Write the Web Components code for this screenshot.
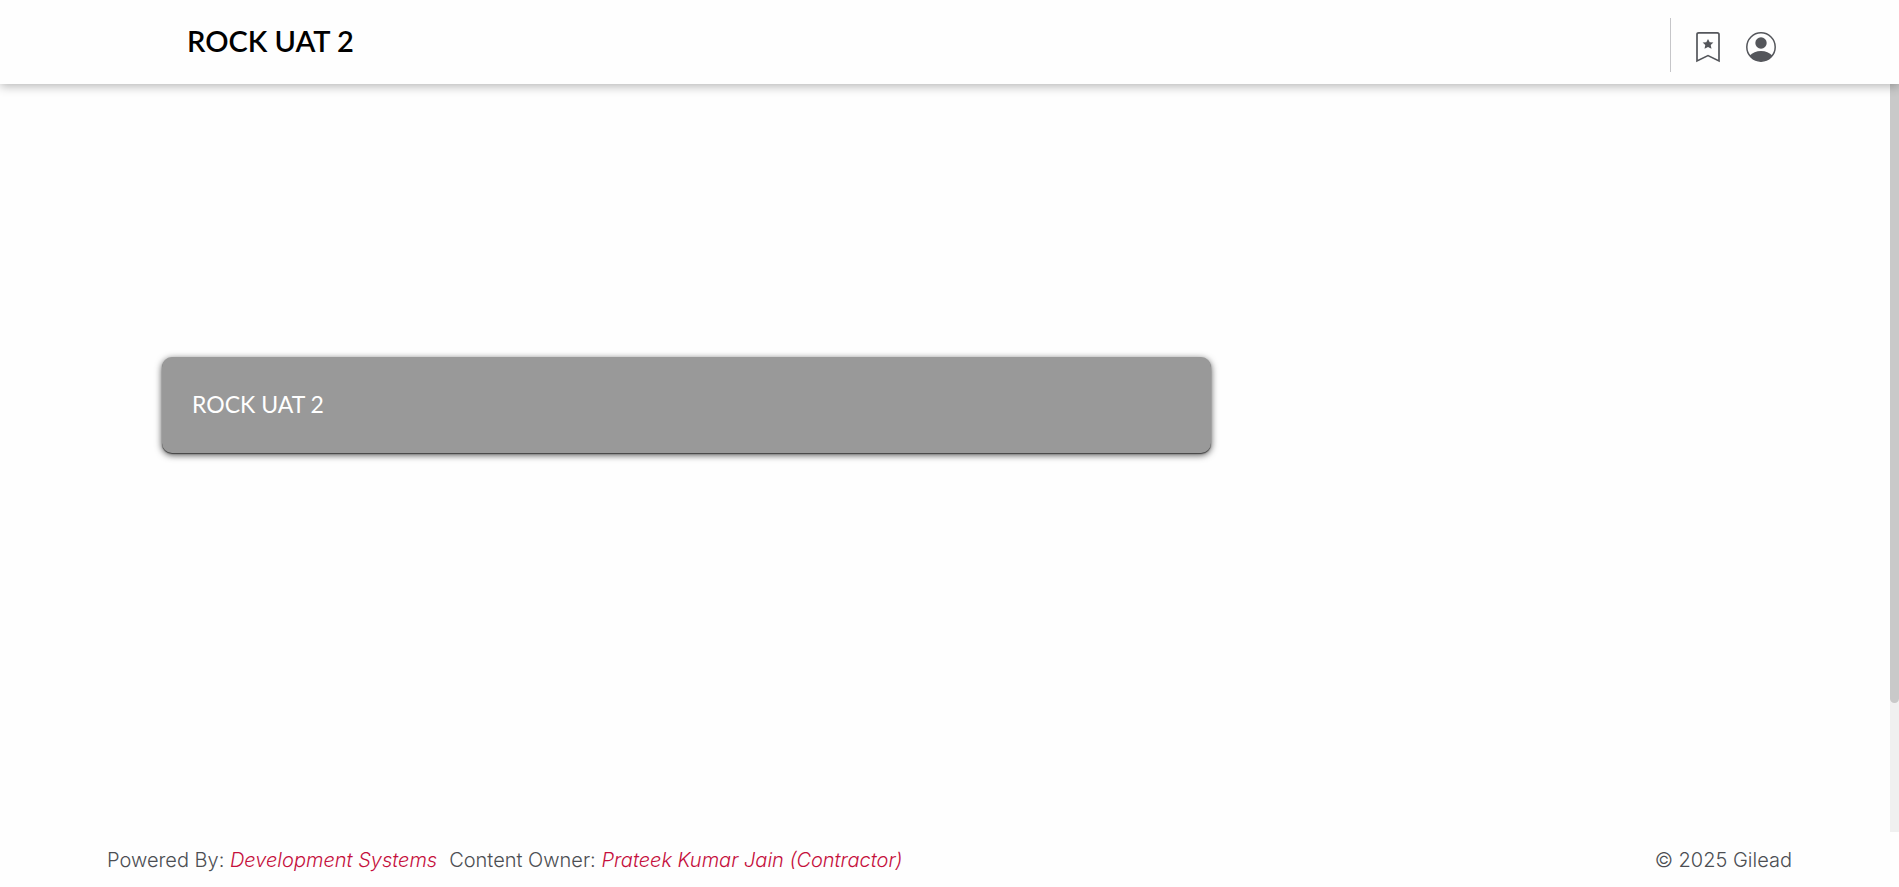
<!DOCTYPE html>
<html lang="en">
<head>
<meta charset="utf-8">
<meta name="viewport" content="width=device-width, initial-scale=1">
<title>ROCK UAT 2</title>
<style>
  html, body { margin: 0; height: 100%; }
  body { background: #fefefe; color: #4c4e53; font: 300 20px/24px Inter, "Open Sans", sans-serif; }
</style>
</head>
<body>
<app-shell>
  <site-header slot="header">ROCK UAT 2
    <icon-button slot="actions" kind="bookmark" label="Bookmarks"></icon-button>
    <icon-button slot="actions" kind="user" label="Profile"></icon-button>
  </site-header>
  <title-card>ROCK UAT 2</title-card>
  <site-footer slot="footer">
    <credit-line label="Powered By:">Development Systems</credit-line>
    <credit-line label="Content Owner:">Prateek Kumar Jain (Contractor)</credit-line>
    <span slot="legal">© 2025 Gilead</span>
  </site-footer>
</app-shell>
<script>
  const define = (name, html, setup) => customElements.define(name, class extends HTMLElement {
    connectedCallback() {
      if (this.shadowRoot) return;
      this.attachShadow({ mode: 'open' }).innerHTML = html;
      if (setup) setup(this, this.shadowRoot);
    }
  });

  define('app-shell', `
    <style>
      :host { display: flex; flex-direction: column; min-height: 100vh; }
      .view { display: flex; flex: 1; }
      main { flex: 1; min-width: 0; padding: 273px 162px 0; }
      .track { display: grid; grid-template-rows: 24fr 5fr; width: 9px; background: #f0f0f0; }
      .thumb { background: #c9c9c9; border-radius: 0 0 5px 5px; }
    </style>
    <slot name="header"></slot>
    <div class="view">
      <main><slot></slot></main>
      <div class="track" aria-hidden="true"><div class="thumb"></div></div>
    </div>
    <slot name="footer"></slot>`);

  define('site-header', `
    <style>
      :host { display: block; position: relative; z-index: 1; background: #fefefe; box-shadow: 0 2px 10px rgba(0, 0, 0, .3); }
      header { display: flex; justify-content: space-between; align-items: flex-start; height: 84px; box-sizing: border-box; padding: 18px 123px 0 187px; }
      h1 { margin: 0; font-family: Lato, sans-serif; font-size: 29px; line-height: 46px; font-weight: 600; color: #000; }
      nav { display: flex; align-items: center; gap: 23px; height: 54px; padding-left: 22px; border-left: 1px solid #c6c6c9; }
    </style>
    <header><h1><slot></slot></h1><nav aria-label="Account"><slot name="actions"></slot></nav></header>`);

  const icons = {
    bookmark: `<svg width="30" height="32" viewBox="0 0 30 32"><path d="M4 30V3.5Q4 1.8 5.7 1.8H24.3Q26 1.8 26 3.5V30L15 24.6Z" fill="none" stroke="currentColor" stroke-width="1.7"/><path d="M15 8l1.7 3.2 3.7.4-2.7 2.5.8 3.7-3.5-1.8-3.5 1.8.8-3.7-2.7-2.5 3.7-.4z" fill="currentColor"/></svg>`,
    user: `<svg width="30" height="32" viewBox="0 0 30 32"><circle cx="15" cy="16" r="14.2" fill="none" stroke="currentColor" stroke-width="1.5"/><circle cx="15" cy="12" r="5.7" fill="currentColor"/><path d="M3.5 24.8Q8 20 15 20T26.5 24.8A15 15 0 0 1 3.5 24.8Z" fill="currentColor"/></svg>`
  };
  define('icon-button', `
    <style>
      :host { display: block; }
      button { display: block; padding: 4px 0 0; border: 0; background: none; color: #54565b; cursor: pointer; }
      svg { display: block; }
    </style>
    <button type="button"></button>`, (el, root) => {
      const button = root.querySelector('button');
      button.setAttribute('aria-label', el.getAttribute('label'));
      button.innerHTML = icons[el.getAttribute('kind')];
    });

  define('title-card', `
    <style>
      :host { display: block; width: 67%; box-sizing: border-box; padding: 31px 30px 33px; border-radius: 10px; background: #999; box-shadow: 0 1px 1px #444, 0 2px 7px rgba(0, 0, 0, .7); }
      h2 { margin: 0; font-family: Lato, sans-serif; font-size: 23px; line-height: 32px; font-weight: 400; color: #fff; }
    </style>
    <h2><slot></slot></h2>`);

  define('site-footer', `
    <style>
      :host { display: block; }
      footer { display: flex; justify-content: space-between; padding: 16px 107px 15px; }
      .credits { display: flex; gap: 12px; }
    </style>
    <footer><div class="credits"><slot></slot></div><slot name="legal"></slot></footer>`);

  define('credit-line', `
    <style>
      :host { display: block; white-space: nowrap; }
      a { color: #c50f3c; font-style: italic; text-decoration: none; }
    </style>
    <span></span> <a href="#"><slot></slot></a>`, (el, root) => {
      root.querySelector('span').textContent = el.getAttribute('label');
    });
</script>
</body>
</html>
